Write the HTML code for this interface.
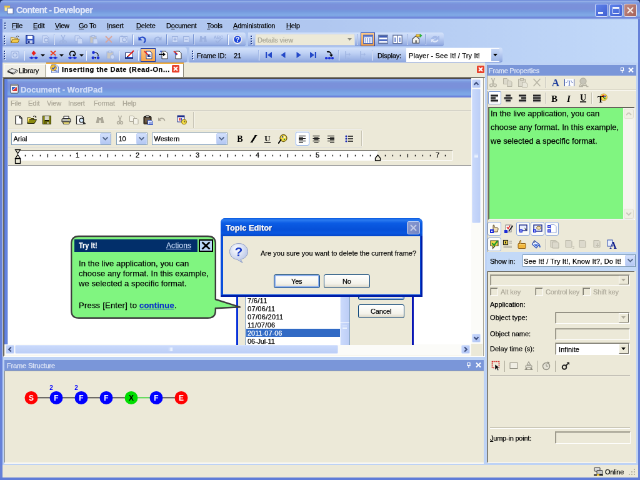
<!DOCTYPE html>
<html><head><meta charset="utf-8"><title>Content - Developer</title>
<style>
*{box-sizing:border-box;margin:0;padding:0}
html,body{width:640px;height:480px;overflow:hidden;background:#ece9d8}
body{position:relative}
#root{position:absolute;left:0;top:0;width:1024px;height:768px;transform:scale(.625);transform-origin:0 0;overflow:hidden;will-change:transform;background:#bdd2f5;font-family:"Liberation Sans",sans-serif;font-size:11px;color:#000}
.a{position:absolute}
.t{position:absolute;white-space:nowrap;-webkit-text-stroke:0.25px currentColor}
u{text-decoration:underline}
</style></head><body><div id="root">
<div class="a" style="left:0px;top:0px;width:1024px;height:8px;background:#1c2c66"></div>
<div class="a" style="left:0px;top:0px;width:1024px;height:30px;border-radius:6px 6px 0 0;background:linear-gradient(#6f8ad8 0,#7290dc 1px,#9ab4e8 2px,#7d9ce1 4px,#7a91da 7px,#7a90da 14px,#7598de 18px,#7fa8e5 23px,#7ea6e4 25.5px,#7189dc 27.5px,#6f86da 29px,#8fa9e6 30px)"></div>
<svg class="a" style="left:6px;top:7px;" width="16" height="16" viewBox="0 0 16 16"><rect x="1" y="2" width="9" height="9" fill="#f4e9a8" stroke="#7d8fb8"/><rect x="6" y="6" width="9" height="9" fill="#fff" stroke="#5a6fa8"/><rect x="1" y="2" width="9" height="3" fill="#e8c24a"/></svg>
<div class="t" style="left:26px;top:7.5px;font-size:14px;line-height:16px;color:#e1e8f9;letter-spacing:-0.58px;font-weight:bold;">Content - Developer</div>
<div class="a" style="left:952px;top:6px;width:21px;height:21px;border:1px solid #dfe7fa;border-radius:3px;background:linear-gradient(135deg,#5f83ea,#3f5fd2)"></div>
<div class="a" style="left:975px;top:6px;width:21px;height:21px;border:1px solid #dfe7fa;border-radius:3px;background:linear-gradient(135deg,#5f83ea,#3f5fd2)"></div>
<div class="a" style="left:998px;top:6px;width:21px;height:21px;border:1px solid #dfe7fa;border-radius:3px;background:linear-gradient(135deg,#c08a82,#a4625a)"></div>
<div class="a" style="left:957px;top:19px;width:8px;height:3px;background:#f0f4fd"></div>
<div class="a" style="left:980px;top:11px;width:11px;height:11px;border:1px solid #f0f4fd;border-top-width:3px"></div>
<svg class="a" style="left:998px;top:6px;" width="21" height="21" viewBox="0 0 21 21"><path d="M6 6L15 15M15 6L6 15" stroke="#f6ecea" stroke-width="2.2"/></svg>
<div class="a" style="left:0px;top:30px;width:1024px;height:70px;background:linear-gradient(90deg,#afc5ee 0,#b0c7f0 50%,#c2d9f9 100%)"></div>
<div class="a" style="left:0px;top:30px;width:1024px;height:1.5px;background:#b5cff5"></div>
<div class="a" style="left:8px;top:37px;width:2px;height:2px;background:#f0f5fd"></div>
<div class="a" style="left:7px;top:36px;width:2px;height:2px;background:#27408b"></div>
<div class="a" style="left:8px;top:41px;width:2px;height:2px;background:#f0f5fd"></div>
<div class="a" style="left:7px;top:40px;width:2px;height:2px;background:#27408b"></div>
<div class="a" style="left:8px;top:45px;width:2px;height:2px;background:#f0f5fd"></div>
<div class="a" style="left:7px;top:44px;width:2px;height:2px;background:#27408b"></div>
<div class="t" style="left:19px;top:35px;font-size:11px;line-height:13px;color:#000;letter-spacing:-0.16px;"><u>F</u>ile</div>
<div class="t" style="left:53px;top:35px;font-size:11px;line-height:13px;color:#000;letter-spacing:-0.17px;"><u>E</u>dit</div>
<div class="t" style="left:88px;top:35px;font-size:11px;line-height:13px;color:#000;letter-spacing:-0.21px;"><u>V</u>iew</div>
<div class="t" style="left:126px;top:35px;font-size:11px;line-height:13px;color:#000;letter-spacing:-0.20px;"><u>G</u>o To</div>
<div class="t" style="left:171px;top:35px;font-size:11px;line-height:13px;color:#000;letter-spacing:-0.16px;"><u>I</u>nsert</div>
<div class="t" style="left:218px;top:35px;font-size:11px;line-height:13px;color:#000;letter-spacing:-0.19px;"><u>D</u>elete</div>
<div class="t" style="left:266px;top:35px;font-size:11px;line-height:13px;color:#000;letter-spacing:-0.22px;">D<u>o</u>cument</div>
<div class="t" style="left:331px;top:35px;font-size:11px;line-height:13px;color:#000;letter-spacing:-0.18px;"><u>T</u>ools</div>
<div class="t" style="left:373px;top:35px;font-size:11px;line-height:13px;color:#000;letter-spacing:-0.17px;"><u>A</u>dministration</div>
<div class="t" style="left:458px;top:35px;font-size:11px;line-height:13px;color:#000;letter-spacing:-0.20px;"><u>H</u>elp</div>
<div class="a" style="left:3px;top:52px;width:390px;height:22px;background:linear-gradient(#d4e2fa 0,#c1d3f5 35%,#a3b9e8 75%,#8ea7df 100%);border-radius:0 4px 4px 0;border-bottom:1px solid #7a94d6;"></div>
<div class="a" style="left:397px;top:52px;width:313px;height:22px;background:linear-gradient(#d4e2fa 0,#c1d3f5 35%,#a3b9e8 75%,#8ea7df 100%);border-radius:0 4px 4px 0;border-bottom:1px solid #7a94d6;"></div>
<div class="a" style="left:3px;top:76px;width:296px;height:24px;background:linear-gradient(#d4e2fa 0,#c1d3f5 35%,#a3b9e8 75%,#8ea7df 100%);border-radius:0 4px 4px 0;border-bottom:1px solid #7a94d6;"></div>
<div class="a" style="left:303px;top:76px;width:501px;height:24px;background:linear-gradient(#d4e2fa 0,#c1d3f5 35%,#a3b9e8 75%,#8ea7df 100%);border-radius:0 4px 4px 0;border-bottom:1px solid #7a94d6;"></div>
<div class="a" style="left:7px;top:58px;width:2px;height:2px;background:#f0f5fd"></div>
<div class="a" style="left:6px;top:57px;width:2px;height:2px;background:#27408b"></div>
<div class="a" style="left:7px;top:62px;width:2px;height:2px;background:#f0f5fd"></div>
<div class="a" style="left:6px;top:61px;width:2px;height:2px;background:#27408b"></div>
<div class="a" style="left:7px;top:66px;width:2px;height:2px;background:#f0f5fd"></div>
<div class="a" style="left:6px;top:65px;width:2px;height:2px;background:#27408b"></div>
<div class="a" style="left:7px;top:70px;width:2px;height:2px;background:#f0f5fd"></div>
<div class="a" style="left:6px;top:69px;width:2px;height:2px;background:#27408b"></div>
<div class="a" style="left:402px;top:58px;width:2px;height:2px;background:#f0f5fd"></div>
<div class="a" style="left:401px;top:57px;width:2px;height:2px;background:#27408b"></div>
<div class="a" style="left:402px;top:62px;width:2px;height:2px;background:#f0f5fd"></div>
<div class="a" style="left:401px;top:61px;width:2px;height:2px;background:#27408b"></div>
<div class="a" style="left:402px;top:66px;width:2px;height:2px;background:#f0f5fd"></div>
<div class="a" style="left:401px;top:65px;width:2px;height:2px;background:#27408b"></div>
<div class="a" style="left:402px;top:70px;width:2px;height:2px;background:#f0f5fd"></div>
<div class="a" style="left:401px;top:69px;width:2px;height:2px;background:#27408b"></div>
<div class="a" style="left:7px;top:82px;width:2px;height:2px;background:#f0f5fd"></div>
<div class="a" style="left:6px;top:81px;width:2px;height:2px;background:#27408b"></div>
<div class="a" style="left:7px;top:86px;width:2px;height:2px;background:#f0f5fd"></div>
<div class="a" style="left:6px;top:85px;width:2px;height:2px;background:#27408b"></div>
<div class="a" style="left:7px;top:90px;width:2px;height:2px;background:#f0f5fd"></div>
<div class="a" style="left:6px;top:89px;width:2px;height:2px;background:#27408b"></div>
<div class="a" style="left:7px;top:94px;width:2px;height:2px;background:#f0f5fd"></div>
<div class="a" style="left:6px;top:93px;width:2px;height:2px;background:#27408b"></div>
<div class="a" style="left:308px;top:82px;width:2px;height:2px;background:#f0f5fd"></div>
<div class="a" style="left:307px;top:81px;width:2px;height:2px;background:#27408b"></div>
<div class="a" style="left:308px;top:86px;width:2px;height:2px;background:#f0f5fd"></div>
<div class="a" style="left:307px;top:85px;width:2px;height:2px;background:#27408b"></div>
<div class="a" style="left:308px;top:90px;width:2px;height:2px;background:#f0f5fd"></div>
<div class="a" style="left:307px;top:89px;width:2px;height:2px;background:#27408b"></div>
<div class="a" style="left:308px;top:94px;width:2px;height:2px;background:#f0f5fd"></div>
<div class="a" style="left:307px;top:93px;width:2px;height:2px;background:#27408b"></div>
<div class="a" style="left:86px;top:55px;width:1px;height:16px;background:#7391d2"></div>
<div class="a" style="left:87px;top:56px;width:1px;height:16px;background:#f4f8fe"></div>
<div class="a" style="left:212px;top:55px;width:1px;height:16px;background:#7391d2"></div>
<div class="a" style="left:213px;top:56px;width:1px;height:16px;background:#f4f8fe"></div>
<div class="a" style="left:266px;top:55px;width:1px;height:16px;background:#7391d2"></div>
<div class="a" style="left:267px;top:56px;width:1px;height:16px;background:#f4f8fe"></div>
<div class="a" style="left:309px;top:55px;width:1px;height:16px;background:#7391d2"></div>
<div class="a" style="left:310px;top:56px;width:1px;height:16px;background:#f4f8fe"></div>
<div class="a" style="left:364px;top:55px;width:1px;height:16px;background:#7391d2"></div>
<div class="a" style="left:365px;top:56px;width:1px;height:16px;background:#f4f8fe"></div>
<div class="a" style="left:571px;top:55px;width:1px;height:16px;background:#7391d2"></div>
<div class="a" style="left:572px;top:56px;width:1px;height:16px;background:#f4f8fe"></div>
<div class="a" style="left:651px;top:55px;width:1px;height:16px;background:#7391d2"></div>
<div class="a" style="left:652px;top:56px;width:1px;height:16px;background:#f4f8fe"></div>
<div class="a" style="left:680px;top:55px;width:1px;height:16px;background:#7391d2"></div>
<div class="a" style="left:681px;top:56px;width:1px;height:16px;background:#f4f8fe"></div>
<div class="a" style="left:38px;top:80px;width:1px;height:16px;background:#9fb6e6"></div>
<div class="a" style="left:39px;top:81px;width:1px;height:16px;background:#f4f8fe"></div>
<div class="a" style="left:137px;top:80px;width:1px;height:16px;background:#9fb6e6"></div>
<div class="a" style="left:138px;top:81px;width:1px;height:16px;background:#f4f8fe"></div>
<div class="a" style="left:190px;top:80px;width:1px;height:16px;background:#9fb6e6"></div>
<div class="a" style="left:191px;top:81px;width:1px;height:16px;background:#f4f8fe"></div>
<div class="a" style="left:220px;top:80px;width:1px;height:16px;background:#9fb6e6"></div>
<div class="a" style="left:221px;top:81px;width:1px;height:16px;background:#f4f8fe"></div>
<div class="a" style="left:413px;top:80px;width:1px;height:16px;background:#9fb6e6"></div>
<div class="a" style="left:414px;top:81px;width:1px;height:16px;background:#f4f8fe"></div>
<div class="a" style="left:541px;top:80px;width:1px;height:16px;background:#9fb6e6"></div>
<div class="a" style="left:542px;top:81px;width:1px;height:16px;background:#f4f8fe"></div>
<div class="a" style="left:595px;top:80px;width:1px;height:16px;background:#9fb6e6"></div>
<div class="a" style="left:596px;top:81px;width:1px;height:16px;background:#f4f8fe"></div>
<svg class="a" style="left:16px;top:55px;" width="16" height="16" viewBox="0 0 16 16"><path d="M1.5 13.5V4.5H5.5L7 6H12.5V8" fill="#f7e29a" stroke="#8a6d1f"/><path d="M1.5 13.5L4 8H15L12.5 13.5Z" fill="#f2c94c" stroke="#8a6d1f"/><path d="M10 3.5C12 2 13.5 2.5 14 4" stroke="#444" fill="none"/></svg>
<svg class="a" style="left:40px;top:55px;" width="16" height="16" viewBox="0 0 16 16"><path d="M1.5 1.5H13L14.5 3V14.5H1.5Z" fill="#3557c4" stroke="#1b2f86"/><rect x="4" y="2" width="8" height="5" fill="#fff"/><rect x="4" y="9.5" width="8" height="5" fill="#c9d3ee"/><rect x="5" y="10.5" width="2.5" height="3.5" fill="#1b2f86"/></svg>
<svg class="a" style="left:65px;top:55px;" width="16" height="16" viewBox="0 0 16 16"><path d="M3 2H10L13 5V14H3Z" fill="#cad8f5" stroke="#9db2e0"/><circle cx="9" cy="9" r="3" fill="none" stroke="#9db2e0" stroke-width="1.3"/><path d="M11 11L14 14" stroke="#9db2e0" stroke-width="1.6"/></svg>
<svg class="a" style="left:93px;top:55px;" width="16" height="16" viewBox="0 0 16 16"><path d="M5 1L9.5 10M11 1L6.5 10" stroke="#9db2e0" stroke-width="1.4" fill="none"/><circle cx="5" cy="12.5" r="2.2" fill="none" stroke="#9db2e0" stroke-width="1.4"/><circle cx="11" cy="12.5" r="2.2" fill="none" stroke="#9db2e0" stroke-width="1.4"/></svg>
<svg class="a" style="left:118px;top:55px;" width="16" height="16" viewBox="0 0 16 16"><path d="M2 2H8L10 4V11H2Z" fill="#cad8f5" stroke="#9db2e0"/><path d="M6 6H12L14 8V15H6Z" fill="#cad8f5" stroke="#9db2e0"/></svg>
<svg class="a" style="left:142px;top:55px;" width="16" height="16" viewBox="0 0 16 16"><rect x="2" y="3" width="10" height="11" fill="#c9c6c0" stroke="#9db2e0"/><rect x="5" y="1.5" width="4" height="3" fill="#cad8f5" stroke="#9db2e0"/><path d="M7 7H13L14.5 8.5V15H7Z" fill="#cad8f5" stroke="#9db2e0"/></svg>
<svg class="a" style="left:166px;top:55px;" width="16" height="16" viewBox="0 0 16 16"><path d="M3 3L13 13M13 3L3 13" stroke="#d9a49a" stroke-width="1.8"/></svg>
<svg class="a" style="left:190px;top:55px;" width="16" height="16" viewBox="0 0 16 16"><rect x="1.5" y="3.5" width="13" height="10" rx="1" fill="#cad8f5" stroke="#9db2e0"/><circle cx="9" cy="8.5" r="3.2" fill="none" stroke="#9db2e0" stroke-width="1.3"/><rect x="3" y="2" width="4" height="2" fill="#9db2e0"/></svg>
<svg class="a" style="left:220px;top:55px;" width="16" height="16" viewBox="0 0 16 16"><path d="M3 7C6 3 12 4 12.5 9C12.5 11 11.5 12.5 10 13.5" stroke="#2449c8" stroke-width="2.2" fill="none"/><path d="M1.5 3.5V9.5H7.5Z" fill="#2449c8"/></svg>
<svg class="a" style="left:244px;top:55px;" width="16" height="16" viewBox="0 0 16 16"><path d="M13 7C10 3 4 4 3.5 9C3.5 11 4.5 12.5 6 13.5" stroke="#9db2e0" stroke-width="2" fill="none"/><path d="M14.5 3.5V9.5H8.5Z" fill="#9db2e0"/></svg>
<svg class="a" style="left:272px;top:55px;" width="16" height="16" viewBox="0 0 16 16"><rect x="3.5" y="3.5" width="9" height="9" fill="#cad8f5" stroke="#9db2e0"/><path d="M5.5 8H10.5M8 5.5V10.5" stroke="#9db2e0" stroke-width="1.4"/></svg>
<svg class="a" style="left:290px;top:55px;" width="16" height="16" viewBox="0 0 16 16"><rect x="3.5" y="3.5" width="9" height="9" fill="#cad8f5" stroke="#9db2e0"/><path d="M5.5 8H10.5" stroke="#9db2e0" stroke-width="1.4"/></svg>
<svg class="a" style="left:317px;top:55px;" width="16" height="16" viewBox="0 0 16 16"><path d="M3 3H6V6L7 12H2L3 6Z M10 3H13V6L14 12H9L10 6Z" fill="#9db2e0"/><rect x="6" y="5" width="4" height="3" fill="#9db2e0"/></svg>
<svg class="a" style="left:341px;top:55px;" width="16" height="16" viewBox="0 0 16 16"><text x="1" y="7" font-family="Liberation Sans, sans-serif" font-size="7" font-weight="bold" fill="#9db2e0">ABC</text><path d="M4 10L7 13.5L13 7" stroke="#9db2e0" stroke-width="1.8" fill="none"/></svg>
<svg class="a" style="left:372px;top:55px;" width="16" height="16" viewBox="0 0 16 16"><circle cx="8.4" cy="8.4" r="7.6" fill="#b8b8c0"/><circle cx="8" cy="8" r="7.5" fill="#f4f7fe" stroke="#c9d0e0"/><circle cx="8" cy="8" r="5.8" fill="#1f46d8"/><text x="8" y="12" text-anchor="middle" font-family="Liberation Sans, sans-serif" font-size="11" font-weight="bold" fill="#fff">?</text></svg>
<div class="a" style="left:577px;top:52px;width:23px;height:22px;background:linear-gradient(#fbc98a,#f7a347);border:1px solid #1a3aa8"></div>
<svg class="a" style="left:581px;top:55px;" width="16" height="16" viewBox="0 0 16 16"><rect x="0.8" y="1.3" width="14.4" height="13.4" fill="#fff" stroke="#4a66b8" stroke-width="1.4"/><rect x="1.5" y="2" width="13" height="2.6" fill="#6d8ad8"/><path d="M4.2 6V13.5M7 6V13.5M10 6V13.5M12.5 6V13.5" stroke="#7f9ade" stroke-width="1.5"/></svg>
<svg class="a" style="left:605px;top:55px;" width="16" height="16" viewBox="0 0 16 16"><rect x="0.8" y="1.3" width="14.4" height="13.4" fill="#fff" stroke="#5d6f9c" stroke-width="1.3"/><rect x="1.5" y="2" width="13" height="3.2" fill="#3f5cb4"/><rect x="1.5" y="8" width="13" height="3" fill="#4a68c0"/><path d="M2 13H14" stroke="#9aa9d0"/></svg>
<svg class="a" style="left:628px;top:55px;" width="16" height="16" viewBox="0 0 16 16"><rect x="0.8" y="1.3" width="14.4" height="13.4" fill="#fff" stroke="#5d6f9c" stroke-width="1.3"/><path d="M8 2V14" stroke="#5d6f9c" stroke-width="1.3"/><path d="M4.2 5V12M11.8 5V12" stroke="#5a78cc" stroke-width="1.8"/></svg>
<svg class="a" style="left:659px;top:54px;" width="18" height="18" viewBox="0 0 18 18"><g transform="translate(-1,-1) scale(1.14)"><path d="M2 14V8L6.5 4L11 8V14Z" fill="#f2f2ee" stroke="#444"/><rect x="5.5" y="10" width="2.5" height="4" fill="#777"/><path d="M7 2H12V5H7Z" fill="#f5c83a" stroke="#a07818" stroke-width=".6"/><path d="M12 0.5L15.5 3.5L12 6.5Z" fill="#2fb23a"/></g></svg>
<svg class="a" style="left:688px;top:55px;" width="16" height="16" viewBox="0 0 16 16"><path d="M2 7.5C3 3 9 1.5 12.5 4.5L14.5 2.5V8.5H8.5L10.5 6.5C8.5 5 5.5 5.5 4.5 8Z" fill="#a6bbe8" stroke="#93abe0" stroke-width=".5"/><path d="M14 8.5C13 13 7 14.5 3.5 11.5L1.5 13.5V7.5H7.5L5.5 9.5C7.5 11 10.5 10.5 11.5 8Z" fill="#dfe8fa" stroke="#a6bbe8" stroke-width=".6"/></svg>
<svg class="a" style="left:16px;top:80px;" width="16" height="16" viewBox="0 0 16 16"><rect x="2" y="2" width="12" height="12" rx="2" fill="#cad8f5" stroke="#9db2e0"/><circle cx="8" cy="8" r="3.3" fill="none" stroke="#9db2e0" stroke-width="1.3"/></svg>
<svg class="a" style="left:46px;top:80px;" width="16" height="16" viewBox="0 0 16 16"><path d="M1 12.5H15" stroke="#1a2fd8" stroke-width="1.4"/><circle cx="4.5" cy="12.5" r="2.1" fill="#1a2fd8"/><circle cx="11.5" cy="12.5" r="2.1" fill="#1a2fd8"/><path d="M8 1L11.5 5L8 9L4.5 5Z" fill="#e8201a"/></svg>
<svg class="a" style="left:65px;top:87px;" width="7" height="4" viewBox="0 0 7 4"><path d="M0 0H7L3.5 3.5Z" fill="#000"/></svg>
<svg class="a" style="left:77px;top:80px;" width="16" height="16" viewBox="0 0 16 16"><path d="M1 12.5H15" stroke="#1a2fd8" stroke-width="1.4"/><circle cx="4.5" cy="12.5" r="2.1" fill="#1a2fd8"/><circle cx="11.5" cy="12.5" r="2.1" fill="#1a2fd8"/><path d="M4 1.5L12 8.5M12 1.5L4 8.5" stroke="#ee3a1a" stroke-width="1.8"/></svg>
<svg class="a" style="left:95px;top:87px;" width="7" height="4" viewBox="0 0 7 4"><path d="M0 0H7L3.5 3.5Z" fill="#000"/></svg>
<svg class="a" style="left:108px;top:80px;" width="16" height="16" viewBox="0 0 16 16"><path d="M1 12.5H15" stroke="#1a2fd8" stroke-width="1.4"/><circle cx="4.5" cy="12.5" r="2.1" fill="#1a2fd8"/><circle cx="11.5" cy="12.5" r="2.1" fill="#1a2fd8"/><path d="M5 9C2.5 7 3.5 2 8 2C12.5 2 13.5 7 11 9" stroke="#000" stroke-width="1.5" fill="none"/><path d="M9 6.5L12.5 9.5L8.5 10Z" fill="#000"/></svg>
<svg class="a" style="left:127px;top:87px;" width="7" height="4" viewBox="0 0 7 4"><path d="M0 0H7L3.5 3.5Z" fill="#000"/></svg>
<svg class="a" style="left:145px;top:80px;" width="16" height="16" viewBox="0 0 16 16"><path d="M5 4C12 4 12.5 7 12 10" stroke="#000" stroke-width="1.1" fill="none"/><path d="M6 12.5H9" stroke="#000" stroke-width="1.1"/><path d="M6 12.5L8 11V14Z" fill="#000"/><circle cx="4.5" cy="4" r="2.3" fill="#1a2fd8"/><circle cx="3.8" cy="12.5" r="2.3" fill="#1a2fd8"/><circle cx="12" cy="12.5" r="2.3" fill="#1a2fd8"/></svg>
<svg class="a" style="left:169px;top:80px;" width="16" height="16" viewBox="0 0 16 16"><rect x="2" y="3" width="10" height="11" fill="#cbc8c2" stroke="#9db2e0"/><rect x="5" y="1.5" width="4" height="3" fill="#cad8f5" stroke="#9db2e0"/><circle cx="11" cy="11" r="3.5" fill="#cad8f5" stroke="#9db2e0"/></svg>
<svg class="a" style="left:199px;top:80px;" width="16" height="16" viewBox="0 0 16 16"><rect x="1.5" y="4.5" width="12" height="9" fill="#fff" stroke="#1a2a6a"/><rect x="2" y="11" width="11" height="2" fill="#2a4ac8"/><path d="M15 1L6 10" stroke="#e8201a" stroke-width="2"/><path d="M6 10L4.5 11.5" stroke="#000" stroke-width="1.6"/></svg>
<div class="a" style="left:225px;top:77px;width:24px;height:22px;background:linear-gradient(#fbc98a,#f7a347);border:1px solid #1a3aa8"></div>
<svg class="a" style="left:229px;top:80px;" width="16" height="16" viewBox="0 0 16 16"><path d="M5 2H11L14 5V14H5Z" fill="#fff" stroke="#223a8a"/><path d="M7 8H12M7 10.5H12" stroke="#223a8a"/><path d="M2 2L9 9" stroke="#e8201a" stroke-width="1.8"/><path d="M6 10L10.5 10.5L10 6Z" fill="#1a2a6a"/></svg>
<svg class="a" style="left:254px;top:80px;" width="16" height="16" viewBox="0 0 16 16"><path d="M5 2H11L14 5V14H5Z" fill="#fff" stroke="#333"/><path d="M1 7H8" stroke="#000" stroke-width="1.8"/><path d="M7 4L11 7L7 10Z" fill="#000"/><path d="M2 2L5 2" stroke="#2a4ac8" stroke-width="1.5"/></svg>
<svg class="a" style="left:277px;top:80px;" width="16" height="16" viewBox="0 0 16 16"><path d="M4 2H10L13 5V14H4Z" fill="#fff" stroke="#333"/><path d="M1 2L7 7" stroke="#e8201a" stroke-width="1.8"/><path d="M3 5L6 8" stroke="#2a4ac8" stroke-width="1.6"/></svg>
<svg class="a" style="left:422px;top:80px;" width="16" height="16" viewBox="0 0 16 16"><rect x="3" y="3" width="2.2" height="10" fill="#2449c8"/><path d="M13 3V13L6 8Z" fill="#2449c8"/></svg>
<svg class="a" style="left:445px;top:80px;" width="16" height="16" viewBox="0 0 16 16"><path d="M11.5 3V13L4.5 8Z" fill="#2449c8"/></svg>
<svg class="a" style="left:470px;top:80px;" width="16" height="16" viewBox="0 0 16 16"><path d="M4.5 3V13L11.5 8Z" fill="#2449c8"/></svg>
<svg class="a" style="left:493px;top:80px;" width="16" height="16" viewBox="0 0 16 16"><rect x="10.8" y="3" width="2.2" height="10" fill="#2449c8"/><path d="M3 3V13L10 8Z" fill="#2449c8"/></svg>
<svg class="a" style="left:519px;top:80px;" width="16" height="16" viewBox="0 0 16 16"><path d="M1 13H15" stroke="#1a2fd8" stroke-width="1.2"/><circle cx="3" cy="13" r="1.9" fill="#1a2fd8"/><circle cx="8" cy="13" r="1.9" fill="#1a2fd8"/><circle cx="13" cy="13" r="1.9" fill="#1a2fd8"/><path d="M4 3C8 2 11 4 11 8" stroke="#000" stroke-width="1.8" fill="none"/><path d="M8 7.5H14L11 11Z" fill="#000"/></svg>
<svg class="a" style="left:549px;top:80px;" width="16" height="16" viewBox="0 0 16 16"><path d="M4 2V14" stroke="#9db2e0" stroke-width="1.4"/><path d="M5 7H11M9 5L11.5 7L9 9" stroke="#9db2e0" fill="none"/><path d="M7 12L11 13.5L7 15Z" fill="#9db2e0" opacity=".6"/></svg>
<svg class="a" style="left:573px;top:80px;" width="16" height="16" viewBox="0 0 16 16"><path d="M4 2V14" stroke="#9db2e0" stroke-width="1.4"/><path d="M5 7H11M9 5L11.5 7L9 9" stroke="#9db2e0" fill="none"/><path d="M7 12L11 13.5L7 15Z" fill="#9db2e0" opacity=".6"/></svg>
<div class="a" style="left:408px;top:54px;width:160px;height:19px;background:#ece9d8;border:1px solid #c9d6ee"></div>
<div class="t" style="left:412px;top:58px;font-size:11px;line-height:13px;color:#a9a796;letter-spacing:-0.14px;">Details view</div>
<svg class="a" style="left:556px;top:61px;" width="8" height="5" viewBox="0 0 8 5"><path d="M0 0H7L3.5 4Z" fill="#8a8a80"/></svg>
<div class="t" style="left:315px;top:83px;font-size:11px;line-height:13px;color:#000;letter-spacing:-0.21px;">Frame ID:</div>
<div class="t" style="left:374px;top:83px;font-size:11px;line-height:13px;color:#000;">21</div>
<div class="t" style="left:604px;top:83px;font-size:11px;line-height:13px;color:#000;letter-spacing:-0.14px;">Display:</div>
<div class="a" style="left:650px;top:77px;width:149px;height:22px;background:#fff;border:1px solid #fff"></div>
<div class="t" style="left:654px;top:83px;font-size:11px;line-height:13px;color:#000;letter-spacing:0.18px;">Player - See It! / Try It!</div>
<div class="a" style="left:786px;top:78px;width:13px;height:20px;background:linear-gradient(#c5d6f6,#9db6e6)"></div>
<svg class="a" style="left:789px;top:86px;" width="8" height="5" viewBox="0 0 8 5"><path d="M0 0H7L3.5 4Z" fill="#000"/></svg>
<div class="a" style="left:3px;top:100px;width:773px;height:24px;background:#ece9d8"></div>
<div class="a" style="left:3px;top:100px;width:773px;height:1px;background:#f8f7f0"></div>
<div class="a" style="left:6px;top:103px;width:67px;height:20px;background:#f1efe6;border:1px solid #fff;border-right-color:#aca899;border-bottom:none"></div>
<svg class="a" style="left:11px;top:107px;" width="18" height="13" viewBox="0 0 18 13"><path d="M1 6.5L8 2.5L17 5.5L10 10Z" fill="#e8e8e8" stroke="#333" stroke-width=".9"/><path d="M1 6.5L10 10V12L1 8.5Z" fill="#222"/><path d="M10 10L17 5.5V7.5L10 12Z" fill="#f4f4f4" stroke="#333" stroke-width=".8"/><path d="M4 6L9 3.5L14 5.5" stroke="#aaa" fill="none" stroke-width=".8"/></svg>
<div class="t" style="left:30px;top:106.5px;font-size:11px;line-height:13px;color:#000;letter-spacing:-0.23px;">Library</div>
<div class="a" style="left:74px;top:100px;width:220px;height:24px;background:#fff;border-right:1px solid #8a867a"></div>
<div class="a" style="left:74px;top:100px;width:220px;height:2px;background:#f2a629"></div>
<svg class="a" style="left:79px;top:102px;" width="16" height="16" viewBox="0 0 16 16"><path d="M3.5 1.5H11L14.5 5V14.5H3.5Z" fill="#dfe8fb" stroke="#6a86c8"/><circle cx="6.5" cy="6.5" r="4.8" fill="#f3c33a" stroke="#b8862a"/><path d="M4 6.5L6 8.5L9.5 4.5" stroke="#3050c0" fill="none" stroke-width="1.6"/><path d="M8 11L13 12" stroke="#3050c0" stroke-width="1.5"/></svg>
<div class="t" style="left:99px;top:104.5px;font-size:11px;line-height:13px;color:#000;letter-spacing:0.61px;font-weight:bold;">Inserting the Date (Read-On...</div>
<svg class="a" style="left:275px;top:104px;" width="12" height="12" viewBox="0 0 12 12"><rect x="0" y="0" width="12" height="12" rx="1.5" fill="#e8412c"/><path d="M3 3L9 9M9 3L3 9" stroke="#fff" stroke-width="2"/></svg>
<svg class="a" style="left:763px;top:105px;" width="12" height="12" viewBox="0 0 12 12"><rect x="0" y="0" width="12" height="12" rx="1.5" fill="#e8412c"/><path d="M3 3L9 9M9 3L3 9" stroke="#fff" stroke-width="2"/></svg>
<div class="a" style="left:3px;top:123px;width:773px;height:1px;background:#8a867a"></div>
<div class="a" style="left:0px;top:30px;width:4px;height:738px;background:#6681d8"></div>
<div class="a" style="left:1021px;top:30px;width:3px;height:738px;background:#6681d8"></div>
<div class="a" style="left:0px;top:764px;width:1024px;height:4px;background:#5f7cd8"></div>
<div class="a" style="left:4px;top:124px;width:772px;height:447px;background:#ece9d8"></div>
<div class="a" style="left:5px;top:124px;width:771px;height:447px;background:#ece9d8;border:1px solid #716f64;border-right-color:#fff;border-bottom-color:#fff"></div>
<div class="a" style="left:6px;top:125px;width:1px;height:444px;background:#4a443c"></div>
<div class="a" style="left:6px;top:125px;width:767px;height:1px;background:#4a443c"></div>
<div class="a" style="left:7px;top:126px;width:748px;height:30px;background:linear-gradient(#6f88dc 0,#7893de 1px,#8fb0ea 2px,#7d9ce1 4px,#7a91da 7px,#7a90da 14px,#7598de 18px,#7da6e5 23px,#7da7e6 26px,#6b82dc 28px,#6a80dc 30px)"></div>
<div class="a" style="left:7px;top:126px;width:5px;height:426px;background:#6282e0"></div>
<div class="a" style="left:12px;top:156px;width:1px;height:396px;background:#c8d0e8"></div>
<svg class="a" style="left:16px;top:134px;" width="14" height="16" viewBox="0 0 14 16"><rect x="1" y="1" width="12" height="14" rx="1" fill="#fff" stroke="#444"/><rect x="2" y="2" width="10" height="2" fill="#999"/><path d="M3 12L11 5V12Z" fill="#d33"/><path d="M3 5H10L3 11Z" fill="#36c"/></svg>
<div class="t" style="left:33px;top:135.5px;font-size:13px;line-height:15px;color:#d0dcf7;letter-spacing:-0.05px;font-weight:bold;">Document - WordPad</div>
<div class="a" style="left:13px;top:156px;width:742px;height:20px;background:#ece9d8"></div>
<div class="t" style="left:17px;top:159px;font-size:11px;line-height:13px;color:#aca899;letter-spacing:-0.13px;">File</div>
<div class="t" style="left:45px;top:159px;font-size:11px;line-height:13px;color:#aca899;letter-spacing:-0.14px;">Edit</div>
<div class="t" style="left:75px;top:159px;font-size:11px;line-height:13px;color:#aca899;letter-spacing:-0.18px;">View</div>
<div class="t" style="left:109px;top:159px;font-size:11px;line-height:13px;color:#aca899;letter-spacing:-0.14px;">Insert</div>
<div class="t" style="left:150px;top:159px;font-size:11px;line-height:13px;color:#aca899;letter-spacing:-0.17px;">Format</div>
<div class="t" style="left:196px;top:159px;font-size:11px;line-height:13px;color:#aca899;letter-spacing:-0.17px;">Help</div>
<div class="a" style="left:13px;top:176px;width:742px;height:1px;background:#c5c2b2"></div>
<div class="a" style="left:13px;top:177px;width:742px;height:1px;background:#fff"></div>
<div class="a" style="left:13px;top:206px;width:566px;height:1px;background:#c5c2b2"></div>
<div class="a" style="left:13px;top:207px;width:566px;height:1px;background:#fff"></div>
<div class="a" style="left:309px;top:179px;width:1px;height:26px;background:#c5c2b2"></div>
<div class="a" style="left:310px;top:179px;width:1px;height:26px;background:#fff"></div>
<svg class="a" style="left:22px;top:184px;" width="16" height="16" viewBox="0 0 16 16"><path d="M3 1.5H9.5L13 5V14.5H3Z" fill="#fff" stroke="#000" stroke-width="1.2"/><path d="M9.5 1.5V5H13" fill="none" stroke="#000"/></svg>
<svg class="a" style="left:43px;top:184px;" width="18" height="16" viewBox="0 0 18 16"><path d="M1 13.5V4H5L6.5 5.5H11V7.5" fill="#f5e27a" stroke="#3a3a00"/><path d="M1 13.5L4 7.5H15.5L12 13.5Z" fill="#8a8a10" stroke="#1a1a00"/><path d="M2 8V12L4 8Z" fill="#f5d83a"/><path d="M10 2.5C12 1 14 1.5 14.5 3.5" stroke="#000" fill="none"/><path d="M13 4L15.5 3.5L14.5 1.5" fill="#000"/></svg>
<svg class="a" style="left:67px;top:184px;" width="16" height="16" viewBox="0 0 16 16"><rect x="1" y="1" width="14" height="14" fill="#1a1a00"/><rect x="2" y="2" width="2.5" height="12" fill="#8a8a10"/><rect x="11.5" y="2" width="2.5" height="12" fill="#8a8a10"/><rect x="4.5" y="2" width="7" height="6" fill="#d8d8c8"/><rect x="5" y="10" width="6" height="4" fill="#6a6a10"/><rect x="9" y="11" width="1.5" height="3" fill="#fff"/></svg>
<svg class="a" style="left:98px;top:184px;" width="16" height="16" viewBox="0 0 16 16"><path d="M4 6V2H12V6" fill="#fff" stroke="#222"/><path d="M1 7Q1 5.5 3 5.5H13Q15 5.5 15 7V11H1Z" fill="#b8b8b0" stroke="#222"/><path d="M2.5 11H13.5L12.5 14.5H3.5Z" fill="#f2e27a" stroke="#222"/><rect x="11" y="7" width="2" height="1.3" fill="#dd3"/></svg>
<svg class="a" style="left:121px;top:184px;" width="17" height="16" viewBox="0 0 17 16"><path d="M1.5 1.5H10L12.5 4V14.5H1.5Z" fill="#fff" stroke="#222" stroke-width="1.2"/><circle cx="9.5" cy="8.5" r="3.3" fill="#cfe6f8" stroke="#222" stroke-width="1.3"/><path d="M12 11L15.5 14.5" stroke="#222" stroke-width="2"/></svg>
<svg class="a" style="left:152px;top:184px;" width="16" height="16" viewBox="0 0 16 16"><path d="M3 3H6V6L7 13H1.5L3 6Z M10 3H13V6L14.5 13H9L10 6Z" fill="#aca899"/><rect x="6" y="5" width="4" height="3.5" fill="#aca899"/></svg>
<svg class="a" style="left:184px;top:184px;" width="16" height="16" viewBox="0 0 16 16"><path d="M5.5 1L9 10M10.5 1L7 10" stroke="#aca899" stroke-width="1.4" fill="none"/><circle cx="5.5" cy="12.5" r="2" fill="none" stroke="#aca899" stroke-width="1.4"/><circle cx="10.5" cy="12.5" r="2" fill="none" stroke="#aca899" stroke-width="1.4"/></svg>
<svg class="a" style="left:206px;top:184px;" width="17" height="16" viewBox="0 0 17 16"><path d="M1.5 1.5H7L9 3.5V10.5H1.5Z" fill="#f4f2e8" stroke="#aca899"/><path d="M7.5 5.5H13L15 7.5V14.5H7.5Z" fill="#f4f2e8" stroke="#aca899"/></svg>
<svg class="a" style="left:229px;top:184px;" width="17" height="16" viewBox="0 0 17 16"><rect x="1" y="2.5" width="12" height="12" rx="1" fill="#4a3a28" stroke="#111"/><rect x="4.5" y="1" width="5" height="3" fill="#c8c8c0" stroke="#111"/><rect x="3" y="5" width="8" height="7" fill="#6a5a48"/><path d="M7.5 8.5H13L15.5 11V15.5H7.5Z" fill="#dfe8ff" stroke="#2a4ab8"/><path d="M9 12H14M9 14H14" stroke="#2a4ab8" stroke-width=".8"/></svg>
<svg class="a" style="left:252px;top:184px;" width="16" height="16" viewBox="0 0 16 16"><path d="M3 7C6 4 11 5 11.5 9.5" stroke="#aca899" stroke-width="1.8" fill="none"/><path d="M1 4V9.5H6.5Z" fill="#aca899"/></svg>
<svg class="a" style="left:283px;top:184px;" width="17" height="16" viewBox="0 0 17 16"><rect x="1" y="1" width="11" height="10" fill="#fff" stroke="#1a2a8a"/><rect x="1" y="1" width="11" height="2.5" fill="#1a2a8a"/><path d="M3 6H6M3 8H6" stroke="#d22" stroke-width="1.4"/><path d="M7.5 5V9" stroke="#2a4ac8" stroke-width="1.4"/><circle cx="11.5" cy="11" r="4" fill="#f7e24a" stroke="#8a6a00"/><path d="M11.5 8.5V11H13.5" stroke="#333" fill="none"/></svg>
<svg class="a" style="left:376px;top:214px;" width="16" height="16" viewBox="0 0 16 16"><text x="8" y="13" text-anchor="middle" font-family="Liberation Serif, serif" font-weight="bold" font-size="14" fill="#000">B</text></svg>
<svg class="a" style="left:398px;top:214px;" width="16" height="16" viewBox="0 0 16 16"><path d="M11.5 2.5L4.5 13.5" stroke="#000" stroke-width="2.6"/><path d="M9.5 2.5H13.5M2.5 13.5H6.5" stroke="#000" stroke-width="1"/></svg>
<svg class="a" style="left:420px;top:214px;" width="16" height="16" viewBox="0 0 16 16"><text x="8" y="11.5" text-anchor="middle" font-family="Liberation Serif, serif" font-weight="bold" font-size="13" fill="#000">U</text><path d="M3 14H13" stroke="#000" stroke-width="1.4"/></svg>
<svg class="a" style="left:444px;top:214px;" width="17" height="17" viewBox="0 0 17 17"><circle cx="9.5" cy="7" r="5.5" fill="#f3dc4a" stroke="#6a5a10" stroke-width="1.3"/><circle cx="8" cy="5" r="1.2" fill="#2a4ac8"/><circle cx="11.5" cy="5.5" r="1.2" fill="#fff"/><circle cx="11" cy="9" r="1.2" fill="#2a9a3a"/><path d="M1.5 15L6 9" stroke="#000" stroke-width="1.8"/><path d="M1 15.5L3.5 14.5" stroke="#000"/></svg>
<div class="a" style="left:473px;top:211px;width:22px;height:22px;background:#fff;border:1px solid #98b5e2;border-radius:3px;box-shadow:0 0 0 1px #dfe8f8"></div>
<svg class="a" style="left:476px;top:214px;" width="16" height="16" viewBox="0 0 16 16"><rect x="2" y="3" width="11" height="1.2" fill="#111"/><rect x="2" y="5" width="7" height="1.2" fill="#111"/><rect x="2" y="7" width="11" height="1.2" fill="#111"/><rect x="2" y="9" width="7" height="1.2" fill="#111"/><rect x="2" y="11" width="11" height="1.2" fill="#111"/><rect x="2" y="13" width="7" height="1.2" fill="#111"/></svg>
<svg class="a" style="left:498px;top:214px;" width="16" height="16" viewBox="0 0 16 16"><rect x="2.5" y="3" width="11" height="1.2" fill="#111"/><rect x="4.5" y="5" width="7" height="1.2" fill="#111"/><rect x="2.5" y="7" width="11" height="1.2" fill="#111"/><rect x="4.5" y="9" width="7" height="1.2" fill="#111"/><rect x="2.5" y="11" width="11" height="1.2" fill="#111"/><rect x="4.5" y="13" width="7" height="1.2" fill="#111"/></svg>
<svg class="a" style="left:521px;top:214px;" width="16" height="16" viewBox="0 0 16 16"><rect x="3" y="3" width="11" height="1.2" fill="#111"/><rect x="7" y="5" width="7" height="1.2" fill="#111"/><rect x="3" y="7" width="11" height="1.2" fill="#111"/><rect x="7" y="9" width="7" height="1.2" fill="#111"/><rect x="3" y="11" width="11" height="1.2" fill="#111"/><rect x="7" y="13" width="7" height="1.2" fill="#111"/></svg>
<svg class="a" style="left:551px;top:214px;" width="16" height="16" viewBox="0 0 16 16"><circle cx="3" cy="4" r="1.6" fill="#1a2ab8"/><circle cx="3" cy="8" r="1.6" fill="#1a2ab8"/><circle cx="3" cy="12" r="1.6" fill="#1a2ab8"/><path d="M6 4H14M6 8H14M6 12H14" stroke="#111" stroke-width="1.4"/></svg>
<div class="a" style="left:18px;top:212px;width:160px;height:20px;background:#fff;border:1px solid #7f9db9"></div>
<div class="a" style="left:160px;top:213px;width:17px;height:18px;background:linear-gradient(#d3e0fb,#b3c7f3);border:1px solid #c3d3f7;border-radius:2px"></div>
<svg class="a" style="left:164px;top:219px;" width="9" height="6" viewBox="0 0 9 6"><path d="M0.5 0.5L4.5 4.5L8.5 0.5" stroke="#4d6185" stroke-width="1.8" fill="none"/></svg>
<div class="t" style="left:21.5px;top:215.5px;font-size:11px;line-height:13px;color:#000;">Arial</div>
<div class="a" style="left:186px;top:212px;width:50px;height:20px;background:#fff;border:1px solid #7f9db9"></div>
<div class="a" style="left:218px;top:213px;width:17px;height:18px;background:linear-gradient(#d3e0fb,#b3c7f3);border:1px solid #c3d3f7;border-radius:2px"></div>
<svg class="a" style="left:222px;top:219px;" width="9" height="6" viewBox="0 0 9 6"><path d="M0.5 0.5L4.5 4.5L8.5 0.5" stroke="#4d6185" stroke-width="1.8" fill="none"/></svg>
<div class="t" style="left:189.5px;top:215.5px;font-size:11px;line-height:13px;color:#000;">10</div>
<div class="a" style="left:243px;top:212px;width:121px;height:20px;background:#fff;border:1px solid #7f9db9"></div>
<div class="a" style="left:346px;top:213px;width:17px;height:18px;background:linear-gradient(#d3e0fb,#b3c7f3);border:1px solid #c3d3f7;border-radius:2px"></div>
<svg class="a" style="left:350px;top:219px;" width="9" height="6" viewBox="0 0 9 6"><path d="M0.5 0.5L4.5 4.5L8.5 0.5" stroke="#4d6185" stroke-width="1.8" fill="none"/></svg>
<div class="t" style="left:246.5px;top:215.5px;font-size:11px;line-height:13px;color:#000;">Western</div>
<div class="a" style="left:578px;top:209px;width:1px;height:25px;background:#c5c2b2"></div>
<div class="a" style="left:579px;top:209px;width:1px;height:25px;background:#fff"></div>
<div class="a" style="left:13px;top:235px;width:566px;height:1px;background:#c5c2b2"></div>
<div class="a" style="left:13px;top:236px;width:566px;height:1px;background:#fff"></div>
<div class="a" style="left:13px;top:237px;width:742px;height:27px;background:#ece9d8"></div>
<div class="a" style="left:28px;top:240px;width:696px;height:17px;background:#ece9d8;border:1px solid #aca899;border-bottom-color:#fff;border-right-color:#fff"></div>
<div class="a" style="left:29px;top:240px;width:575px;height:16px;background:#fff;border-top:1.5px solid #55534a"></div>
<div class="a" style="left:604px;top:240px;width:120px;height:1px;background:#8a887c"></div>
<div class="t" style="left:121px;top:242px;font-size:11px;line-height:13px;color:#000;">1</div>
<div class="t" style="left:217px;top:242px;font-size:11px;line-height:13px;color:#000;">2</div>
<div class="t" style="left:313px;top:242px;font-size:11px;line-height:13px;color:#000;">3</div>
<div class="t" style="left:409px;top:242px;font-size:11px;line-height:13px;color:#000;">4</div>
<div class="t" style="left:505px;top:242px;font-size:11px;line-height:13px;color:#000;">5</div>
<div class="t" style="left:697px;top:242px;font-size:11px;line-height:13px;color:#000;">7</div>
<svg class="a" style="left:0px;top:242px;" width="760" height="14" viewBox="0 0 760 14"><rect x="39.8" y="5.7" width="1.3" height="2.6" fill="#000"/><rect x="51.8" y="5.7" width="1.3" height="2.6" fill="#000"/><rect x="63.8" y="5.7" width="1.3" height="2.6" fill="#000"/><rect x="75.8" y="4.25" width="1.3" height="5.5" fill="#000"/><rect x="87.8" y="5.7" width="1.3" height="2.6" fill="#000"/><rect x="99.8" y="5.7" width="1.3" height="2.6" fill="#000"/><rect x="111.8" y="5.7" width="1.3" height="2.6" fill="#000"/><rect x="135.8" y="5.7" width="1.3" height="2.6" fill="#000"/><rect x="147.8" y="5.7" width="1.3" height="2.6" fill="#000"/><rect x="159.8" y="5.7" width="1.3" height="2.6" fill="#000"/><rect x="171.8" y="4.25" width="1.3" height="5.5" fill="#000"/><rect x="183.8" y="5.7" width="1.3" height="2.6" fill="#000"/><rect x="195.8" y="5.7" width="1.3" height="2.6" fill="#000"/><rect x="207.8" y="5.7" width="1.3" height="2.6" fill="#000"/><rect x="231.8" y="5.7" width="1.3" height="2.6" fill="#000"/><rect x="243.8" y="5.7" width="1.3" height="2.6" fill="#000"/><rect x="255.8" y="5.7" width="1.3" height="2.6" fill="#000"/><rect x="267.8" y="4.25" width="1.3" height="5.5" fill="#000"/><rect x="279.8" y="5.7" width="1.3" height="2.6" fill="#000"/><rect x="291.8" y="5.7" width="1.3" height="2.6" fill="#000"/><rect x="303.8" y="5.7" width="1.3" height="2.6" fill="#000"/><rect x="327.8" y="5.7" width="1.3" height="2.6" fill="#000"/><rect x="339.8" y="5.7" width="1.3" height="2.6" fill="#000"/><rect x="351.8" y="5.7" width="1.3" height="2.6" fill="#000"/><rect x="363.8" y="4.25" width="1.3" height="5.5" fill="#000"/><rect x="375.8" y="5.7" width="1.3" height="2.6" fill="#000"/><rect x="387.8" y="5.7" width="1.3" height="2.6" fill="#000"/><rect x="399.8" y="5.7" width="1.3" height="2.6" fill="#000"/><rect x="423.8" y="5.7" width="1.3" height="2.6" fill="#000"/><rect x="435.8" y="5.7" width="1.3" height="2.6" fill="#000"/><rect x="447.8" y="5.7" width="1.3" height="2.6" fill="#000"/><rect x="459.8" y="4.25" width="1.3" height="5.5" fill="#000"/><rect x="471.8" y="5.7" width="1.3" height="2.6" fill="#000"/><rect x="483.8" y="5.7" width="1.3" height="2.6" fill="#000"/><rect x="495.8" y="5.7" width="1.3" height="2.6" fill="#000"/><rect x="519.8" y="5.7" width="1.3" height="2.6" fill="#000"/><rect x="531.8" y="5.7" width="1.3" height="2.6" fill="#000"/><rect x="543.8" y="5.7" width="1.3" height="2.6" fill="#000"/><rect x="555.8" y="4.25" width="1.3" height="5.5" fill="#000"/><rect x="567.8" y="5.7" width="1.3" height="2.6" fill="#000"/><rect x="579.8" y="5.7" width="1.3" height="2.6" fill="#000"/><rect x="591.8" y="5.7" width="1.3" height="2.6" fill="#000"/><rect x="615.8" y="5.7" width="1.3" height="2.6" fill="#000"/><rect x="627.8" y="5.7" width="1.3" height="2.6" fill="#000"/><rect x="639.8" y="5.7" width="1.3" height="2.6" fill="#000"/><rect x="651.8" y="4.25" width="1.3" height="5.5" fill="#000"/><rect x="663.8" y="5.7" width="1.3" height="2.6" fill="#000"/><rect x="675.8" y="5.7" width="1.3" height="2.6" fill="#000"/><rect x="687.8" y="5.7" width="1.3" height="2.6" fill="#000"/><rect x="711.8" y="5.7" width="1.3" height="2.6" fill="#000"/></svg>
<svg class="a" style="left:23px;top:238px;" width="12" height="26" viewBox="0 0 12 26"><path d="M1.5 1.5H9.5L5.5 7.5Z" fill="#ece9d8" stroke="#000" stroke-width="1.3"/><path d="M5.5 9.5L9.5 15.5H1.5Z" fill="#ece9d8" stroke="#000" stroke-width="1.3"/><rect x="1.5" y="16.5" width="8" height="7" fill="#ece9d8" stroke="#000" stroke-width="1.3"/></svg>
<svg class="a" style="left:599px;top:247px;" width="12" height="12" viewBox="0 0 12 12"><path d="M5.5 1L9.5 6V10H1.5V6Z" fill="#ece9d8" stroke="#000" stroke-width="1.3"/></svg>
<div class="a" style="left:13px;top:264px;width:742px;height:1px;background:#808080"></div>
<div class="a" style="left:13px;top:265px;width:742px;height:287px;background:#fff"></div>
<div class="a" style="left:754px;top:125px;width:18px;height:427px;background:#fbfbf8"></div>
<div class="a" style="left:755px;top:127px;width:14px;height:14px;background:linear-gradient(135deg,#c6d6fb,#b0c4f3);border:1px solid #d9e4fc;border-radius:2px"></div>
<svg class="a" style="left:755px;top:127px;" width="14" height="14" viewBox="0 0 14 14"><path transform="translate(7.0,7.0)" d="M-3.5 1.8L0 -1.8L3.5 1.8" stroke="#3f5080" stroke-width="2.2" fill="none"/></svg>
<div class="a" style="left:755px;top:142px;width:14px;height:215px;background:linear-gradient(90deg,#c9d9fb,#bccef6);border:1px solid #d9e4fc;border-radius:2px"></div>
<div class="a" style="left:759px;top:246px;width:6px;height:1px;background:#eef4fe"></div>
<div class="a" style="left:759px;top:248px;width:6px;height:1px;background:#eef4fe"></div>
<div class="a" style="left:759px;top:250px;width:6px;height:1px;background:#eef4fe"></div>
<div class="a" style="left:759px;top:252px;width:6px;height:1px;background:#eef4fe"></div>
<div class="a" style="left:755px;top:534px;width:14px;height:14px;background:linear-gradient(135deg,#c6d6fb,#b0c4f3);border:1px solid #d9e4fc;border-radius:2px"></div>
<svg class="a" style="left:755px;top:534px;" width="14" height="14" viewBox="0 0 14 14"><path transform="translate(7.0,7.0)" d="M-3.5 -1.8L0 1.8L3.5 -1.8" stroke="#3f5080" stroke-width="2.2" fill="none"/></svg>
<div class="a" style="left:7px;top:551px;width:765px;height:18px;background:#fbfbf8"></div>
<div class="a" style="left:9px;top:552px;width:14px;height:14px;background:linear-gradient(135deg,#c6d6fb,#b0c4f3);border:1px solid #d9e4fc;border-radius:2px"></div>
<svg class="a" style="left:9px;top:552px;" width="14" height="14" viewBox="0 0 14 14"><path transform="translate(7.0,7.0)" d="M1.8 -3.5L-1.8 0L1.8 3.5" stroke="#3f5080" stroke-width="2.2" fill="none"/></svg>
<div class="a" style="left:24px;top:552px;width:517px;height:14px;background:linear-gradient(#c9d9fb,#bccef6);border:1px solid #d9e4fc;border-radius:2px"></div>
<div class="a" style="left:270px;top:556px;width:1px;height:6px;background:#eef4fe"></div>
<div class="a" style="left:272px;top:556px;width:1px;height:6px;background:#eef4fe"></div>
<div class="a" style="left:274px;top:556px;width:1px;height:6px;background:#eef4fe"></div>
<div class="a" style="left:276px;top:556px;width:1px;height:6px;background:#eef4fe"></div>
<div class="a" style="left:738px;top:552px;width:14px;height:14px;background:linear-gradient(135deg,#c6d6fb,#b0c4f3);border:1px solid #d9e4fc;border-radius:2px"></div>
<svg class="a" style="left:738px;top:552px;" width="14" height="14" viewBox="0 0 14 14"><path transform="translate(7.0,7.0)" d="M-1.8 -3.5L1.8 0L-1.8 3.5" stroke="#3f5080" stroke-width="2.2" fill="none"/></svg>
<div class="a" style="left:754px;top:550px;width:18px;height:19px;background:#ece9d8"></div>
<div class="a" style="left:772px;top:125px;width:4px;height:445px;background:#f8f7f2"></div>
<div class="a" style="left:773px;top:125px;width:1px;height:445px;background:#a3a196"></div>
<div class="a" style="left:779px;top:104px;width:239px;height:17px;background:#7a96d9"></div>
<div class="t" style="left:782px;top:107px;font-size:11px;line-height:13px;color:#dfe6f6;letter-spacing:-0.25px;">Frame Properties</div>
<svg class="a" style="left:990px;top:106px;" width="26" height="13" viewBox="0 0 26 13"><path d="M3.5 2.5H7.5V6.5H3.5Z M2.5 7H8.5 M5.5 7.5V11" stroke="#fff" stroke-width="1.2" fill="none"/><path d="M16 2.5L23 9.5M23 2.5L16 9.5" stroke="#fff" stroke-width="2"/></svg>
<div class="a" style="left:779px;top:121px;width:239px;height:620px;background:#ece9d8"></div>
<div class="a" style="left:779px;top:104px;width:1px;height:637px;background:#9a988c"></div>
<div class="a" style="left:779px;top:143px;width:239px;height:1px;background:#d8d5c6"></div>
<div class="a" style="left:779px;top:144px;width:239px;height:1px;background:#fbfaf6"></div>
<div class="a" style="left:872px;top:123px;width:1px;height:18px;background:#c5c2b2"></div>
<div class="a" style="left:873px;top:123px;width:1px;height:18px;background:#fff"></div>
<div class="a" style="left:872px;top:148px;width:1px;height:18px;background:#c5c2b2"></div>
<div class="a" style="left:873px;top:148px;width:1px;height:18px;background:#fff"></div>
<div class="a" style="left:946px;top:148px;width:1px;height:18px;background:#c5c2b2"></div>
<div class="a" style="left:947px;top:148px;width:1px;height:18px;background:#fff"></div>
<div class="a" style="left:781px;top:146px;width:21px;height:21px;background:#fff;border:1px solid #7b9ad6;border-radius:2px"></div>
<div class="a" style="left:781px;top:171px;width:235px;height:181px;background:#80f580;border:1px solid #716f64;border-right-color:#fff;border-bottom-color:#fff"></div>
<div class="a" style="left:782px;top:172px;width:233px;height:179px;border:1px solid #5a5850;border-right-color:#d4d0c8;border-bottom-color:#d4d0c8"></div>
<div class="a" style="left:997px;top:173px;width:17px;height:177px;background:#f5f4ee"></div>
<div class="a" style="left:998px;top:174px;width:16px;height:16px;background:#f1efe4;border:1px solid #e3e0d2;border-radius:3px"></div>
<svg class="a" style="left:1002px;top:180px;" width="9" height="5" viewBox="0 0 9 5"><path d="M0 4L4 0L8 4" stroke="#c9c7ba" stroke-width="2" fill="none"/></svg>
<div class="a" style="left:998px;top:334px;width:16px;height:16px;background:#f1efe4;border:1px solid #e3e0d2;border-radius:3px"></div>
<svg class="a" style="left:1002px;top:340px;" width="9" height="5" viewBox="0 0 9 5"><path d="M0 0L4 4L8 0" stroke="#c9c7ba" stroke-width="2" fill="none"/></svg>
<div class="t" style="left:785px;top:174px;font-size:13px;line-height:15px;color:#000;">In the live application, you can</div>
<div class="t" style="left:785px;top:196px;font-size:13px;line-height:15px;color:#000;">choose any format. In this example,</div>
<div class="t" style="left:785px;top:218px;font-size:13px;line-height:15px;color:#000;">we selected a specific format.</div>
<div class="a" style="left:780px;top:355px;width:22px;height:22px;background:#fbfbf8;border:1px solid #8aa6dc;border-radius:3px"></div>
<div class="a" style="left:826px;top:355px;width:22px;height:22px;background:#fbfbf8;border:1px solid #8aa6dc;border-radius:3px"></div>
<div class="a" style="left:849px;top:355px;width:22px;height:22px;background:#fbfbf8;border:1px solid #8aa6dc;border-radius:3px"></div>
<div class="a" style="left:872px;top:355px;width:22px;height:22px;background:#fbfbf8;border:1px solid #8aa6dc;border-radius:3px"></div>
<div class="a" style="left:780px;top:380px;width:22px;height:22px;background:#fbfbf8;border:1px solid #8aa6dc;border-radius:3px"></div>
<div class="a" style="left:872px;top:382px;width:1px;height:18px;background:#c5c2b2"></div>
<div class="a" style="left:873px;top:382px;width:1px;height:18px;background:#fff"></div>
<div class="a" style="left:779px;top:403px;width:239px;height:31px;background:#c3d9f7"></div>
<div class="t" style="left:784px;top:412px;font-size:11px;line-height:13px;color:#000;letter-spacing:-0.27px;">Show in:</div>
<div class="a" style="left:836px;top:407px;width:181px;height:20px;background:#fff;border:1px solid #7f9db9"></div>
<div class="t" style="left:838px;top:412px;font-size:11px;line-height:13px;color:#000;letter-spacing:0.18px;">See It! / Try It!, Know It?, Do It!</div>
<div class="a" style="left:1000px;top:408px;width:16px;height:18px;background:linear-gradient(#d3e0fb,#b3c7f3);border:1px solid #c3d3f7;border-radius:2px"></div>
<svg class="a" style="left:1004px;top:414px;" width="9" height="6" viewBox="0 0 9 6"><path d="M0.5 0.5L4.5 4.5L8.5 0.5" stroke="#4d6185" stroke-width="1.8" fill="none"/></svg>
<div class="a" style="left:780px;top:434px;width:235px;height:306px;border:1.5px solid #6a685e;border-bottom:none;border-right:none"></div>
<div class="a" style="left:784px;top:439px;width:224px;height:18px;background:#ece9d8;border:1px solid #aca899;border-right-color:#fff;border-bottom-color:#fff;box-shadow:inset 1px 1px 0 #7d7b70"></div>
<div class="a" style="left:990px;top:441px;width:16px;height:14px;background:#ece9d8;border:1px solid #fff;border-right-color:#716f64;border-bottom-color:#716f64"></div>
<svg class="a" style="left:994px;top:446px;" width="8" height="5" viewBox="0 0 8 5"><path d="M0 0H7L3.5 4Z" fill="#aca899"/></svg>
<div class="a" style="left:784px;top:460px;width:13px;height:13px;background:#ece9d8;border:1px solid #aca899;border-right-color:#fff;border-bottom-color:#fff;box-shadow:inset 1px 1px 0 #7d7b70"></div>
<div class="t" style="left:801px;top:461px;font-size:11px;line-height:13px;color:#aca899;letter-spacing:-0.14px;">Alt key</div>
<div class="a" style="left:856px;top:460px;width:13px;height:13px;background:#ece9d8;border:1px solid #aca899;border-right-color:#fff;border-bottom-color:#fff;box-shadow:inset 1px 1px 0 #7d7b70"></div>
<div class="t" style="left:873px;top:461px;font-size:11px;line-height:13px;color:#aca899;letter-spacing:-0.15px;">Control key</div>
<div class="a" style="left:932px;top:460px;width:13px;height:13px;background:#ece9d8;border:1px solid #aca899;border-right-color:#fff;border-bottom-color:#fff;box-shadow:inset 1px 1px 0 #7d7b70"></div>
<div class="t" style="left:949px;top:461px;font-size:11px;line-height:13px;color:#aca899;letter-spacing:-0.14px;">Shift key</div>
<div class="t" style="left:784px;top:481px;font-size:11px;line-height:13px;color:#000;letter-spacing:-0.03px;">Application:</div>
<div class="t" style="left:784px;top:502px;font-size:11px;line-height:13px;color:#000;letter-spacing:0.11px;">Object type:</div>
<div class="a" style="left:888px;top:499px;width:120px;height:19px;background:#ece9d8;border:1px solid #aca899;border-right-color:#fff;border-bottom-color:#fff;box-shadow:inset 1px 1px 0 #7d7b70"></div>
<div class="a" style="left:990px;top:501px;width:16px;height:15px;background:#ece9d8;border:1px solid #fff;border-right-color:#716f64;border-bottom-color:#716f64"></div>
<svg class="a" style="left:994px;top:506px;" width="8" height="5" viewBox="0 0 8 5"><path d="M0 0H7L3.5 4Z" fill="#aca899"/></svg>
<div class="t" style="left:784px;top:527.5px;font-size:11px;line-height:13px;color:#000;letter-spacing:-0.03px;">Object name:</div>
<div class="a" style="left:888px;top:525px;width:120px;height:19px;background:#ece9d8;border:1px solid #aca899;border-right-color:#fff;border-bottom-color:#fff;box-shadow:inset 1px 1px 0 #7d7b70"></div>
<div class="t" style="left:784px;top:552px;font-size:11px;line-height:13px;color:#000;letter-spacing:0.01px;">Delay time (s):</div>
<div class="a" style="left:888px;top:548px;width:120px;height:20px;background:#fff;border:1px solid #aca899;border-right-color:#fff;border-bottom-color:#fff;box-shadow:inset 1px 1px 0 #7d7b70"></div>
<div class="a" style="left:990px;top:550px;width:16px;height:16px;background:#ece9d8;border:1px solid #fff;border-right-color:#716f64;border-bottom-color:#716f64"></div>
<svg class="a" style="left:994px;top:556px;" width="8" height="5" viewBox="0 0 8 5"><path d="M0 0H7L3.5 4Z" fill="#000"/></svg>
<div class="t" style="left:894px;top:553px;font-size:11px;line-height:13px;color:#000;letter-spacing:0.07px;">Infinite</div>
<div class="a" style="left:807px;top:577px;width:1px;height:18px;background:#aca899"></div>
<div class="a" style="left:860px;top:577px;width:1px;height:18px;background:#aca899"></div>
<div class="a" style="left:888px;top:577px;width:1px;height:18px;background:#aca899"></div>
<div class="a" style="left:784px;top:600px;width:224px;height:1px;background:#aca899"></div>
<div class="a" style="left:784px;top:601px;width:224px;height:1px;background:#fff"></div>
<div class="a" style="left:784px;top:684px;width:224px;height:1px;background:#aca899"></div>
<div class="a" style="left:784px;top:685px;width:224px;height:1px;background:#fff"></div>
<div class="t" style="left:784px;top:695px;font-size:11px;line-height:13px;color:#000;letter-spacing:-0.22px;"><u>J</u>ump-in point:</div>
<div class="a" style="left:888px;top:690px;width:121px;height:20px;background:#ece9d8;border:1px solid #aca899;border-right-color:#fff;border-bottom-color:#fff;box-shadow:inset 1px 1px 0 #7d7b70"></div>
<div class="a" style="left:779px;top:740px;width:239px;height:1px;background:#fff"></div>
<svg class="a" style="left:781px;top:124px;" width="16" height="16" viewBox="0 0 16 16"><path d="M5.5 1L9 10M10.5 1L7 10" stroke="#b5b2a3" stroke-width="1.5" fill="none"/><circle cx="5" cy="12.5" r="2.2" fill="none" stroke="#b5b2a3" stroke-width="1.5"/><circle cx="11" cy="12.5" r="2.2" fill="none" stroke="#b5b2a3" stroke-width="1.5"/></svg>
<svg class="a" style="left:804px;top:124px;" width="17" height="16" viewBox="0 0 17 16"><path d="M1.5 1.5H7L9 3.5V10.5H1.5Z" fill="#dcd9cc" stroke="#b5b2a3"/><path d="M7.5 5.5H13L15 7.5V14.5H7.5Z" fill="#dcd9cc" stroke="#b5b2a3"/></svg>
<svg class="a" style="left:828px;top:124px;" width="17" height="17" viewBox="0 0 17 17"><rect x="1.5" y="3" width="11" height="11.5" fill="#dcd9cc" stroke="#b5b2a3"/><rect x="4.5" y="1.5" width="5" height="3" fill="#dcd9cc" stroke="#b5b2a3"/><path d="M7.5 7.5H13L15.5 10V15.5H7.5Z" fill="#e8e6da" stroke="#b5b2a3"/></svg>
<svg class="a" style="left:851px;top:124px;" width="16" height="16" viewBox="0 0 16 16"><path d="M2.5 2L13.5 14M13.5 2L2.5 14" stroke="#b5b2a3" stroke-width="1.6"/></svg>
<svg class="a" style="left:881px;top:124px;" width="16" height="16" viewBox="0 0 16 16"><text x="8" y="14" text-anchor="middle" font-family="Liberation Serif, serif" font-weight="bold" font-size="17" fill="#1c3c9c">A</text></svg>
<svg class="a" style="left:902px;top:124px;" width="18" height="16" viewBox="0 0 18 16"><rect x="1" y="2" width="16" height="12" fill="#fbfcff"/><text x="9" y="13" text-anchor="middle" font-family="Liberation Serif, serif" font-size="13" fill="#4a66b8">T</text><path d="M1.5 2.5V14M16.5 2.5V14" stroke="#2a46a8" stroke-width="1"/><path d="M3 8.5H5.5M12.5 8.5H15" stroke="#2a46a8" stroke-width=".9"/></svg>
<svg class="a" style="left:926px;top:124px;" width="16" height="16" viewBox="0 0 16 16"><circle cx="7" cy="6" r="5" fill="#c6c4b8" stroke="#b5b2a3" stroke-width="1.3"/><path d="M3 10L1 14.5H7M11 10L13 14.5H15.5" stroke="#b5b2a3" stroke-width="1.6" fill="none"/><path d="M4 13H12" stroke="#b5b2a3" stroke-width="2"/></svg>
<svg class="a" style="left:783px;top:149px;" width="16" height="16" viewBox="0 0 16 16"><rect x="2" y="2.5" width="12" height="3" fill="#1a1a1a"/><rect x="2" y="4.7" width="12" height="1.6" fill="#8a8a8a"/><rect x="2" y="6.5" width="8" height="3" fill="#1a1a1a"/><rect x="2" y="8.7" width="8" height="1.6" fill="#8a8a8a"/><rect x="2" y="10.5" width="12" height="3" fill="#1a1a1a"/><rect x="2" y="12.7" width="12" height="1.6" fill="#8a8a8a"/></svg>
<svg class="a" style="left:805px;top:149px;" width="16" height="16" viewBox="0 0 16 16"><rect x="4" y="2.5" width="8" height="3" fill="#1a1a1a"/><rect x="4" y="4.7" width="8" height="1.6" fill="#8a8a8a"/><rect x="1.5" y="6.5" width="13" height="3" fill="#1a1a1a"/><rect x="1.5" y="8.7" width="13" height="1.6" fill="#8a8a8a"/><rect x="4" y="10.5" width="8" height="3" fill="#1a1a1a"/><rect x="4" y="12.7" width="8" height="1.6" fill="#8a8a8a"/></svg>
<svg class="a" style="left:828px;top:149px;" width="16" height="16" viewBox="0 0 16 16"><rect x="2" y="2.5" width="12" height="3" fill="#1a1a1a"/><rect x="2" y="4.7" width="12" height="1.6" fill="#8a8a8a"/><rect x="6" y="6.5" width="8" height="3" fill="#1a1a1a"/><rect x="6" y="8.7" width="8" height="1.6" fill="#8a8a8a"/><rect x="2" y="10.5" width="12" height="3" fill="#1a1a1a"/><rect x="2" y="12.7" width="12" height="1.6" fill="#8a8a8a"/></svg>
<svg class="a" style="left:851px;top:149px;" width="16" height="16" viewBox="0 0 16 16"><rect x="2" y="2.5" width="12" height="3" fill="#1a1a1a"/><rect x="2" y="4.7" width="12" height="1.6" fill="#8a8a8a"/><rect x="2" y="6.5" width="12" height="3" fill="#1a1a1a"/><rect x="2" y="8.7" width="12" height="1.6" fill="#8a8a8a"/><rect x="2" y="10.5" width="12" height="3" fill="#1a1a1a"/><rect x="2" y="12.7" width="12" height="1.6" fill="#8a8a8a"/></svg>
<svg class="a" style="left:879px;top:149px;" width="16" height="16" viewBox="0 0 16 16"><text x="8" y="13.5" text-anchor="middle" font-family="Liberation Serif, serif" font-weight="bold" font-size="15" fill="#000">B</text></svg>
<svg class="a" style="left:902px;top:149px;" width="16" height="16" viewBox="0 0 16 16"><text x="8" y="13.5" text-anchor="middle" font-family="Liberation Serif, serif" font-weight="bold" font-style="italic" font-size="15" fill="#000">I</text></svg>
<svg class="a" style="left:925px;top:149px;" width="16" height="16" viewBox="0 0 16 16"><text x="8" y="11.5" text-anchor="middle" font-family="Liberation Serif, serif" font-weight="bold" font-size="14" fill="#000">U</text><path d="M3 14H13" stroke="#000" stroke-width="1.5"/></svg>
<svg class="a" style="left:955px;top:149px;" width="17" height="16" viewBox="0 0 17 16"><circle cx="11" cy="6.5" r="5.5" fill="#f7d54a" stroke="#b8902a" stroke-width=".8"/><circle cx="10" cy="4" r="1.3" fill="#e02020"/><circle cx="13" cy="5" r="1.3" fill="#2040d0"/><circle cx="12.5" cy="8.5" r="1.3" fill="#20a030"/><text x="6" y="15" text-anchor="middle" font-family="Liberation Serif, serif" font-weight="bold" font-size="15" fill="#000">T</text></svg>
<svg class="a" style="left:783px;top:358px;" width="16" height="16" viewBox="0 0 16 16"><path d="M6 7V3Q6 1.5 7.5 2L8.5 6H12.5Q14.5 6.5 14 9L13 13H6Z" fill="#f0dcb0" stroke="#5a4a2a"/><rect x="1" y="9" width="6" height="6" fill="#1a2ad8"/><rect x="3" y="11" width="2" height="2" fill="#fff"/></svg>
<svg class="a" style="left:806px;top:358px;" width="16" height="16" viewBox="0 0 16 16"><rect x="3" y="2" width="9" height="11" fill="#fff" stroke="#777"/><path d="M5 5L7 8L10 3" stroke="#e02020" stroke-width="1.5" fill="none"/><path d="M14.5 3L8 12" stroke="#222" stroke-width="2"/><rect x="1" y="10" width="5" height="5" fill="#1a2ad8"/></svg>
<svg class="a" style="left:829px;top:358px;" width="16" height="16" viewBox="0 0 16 16"><rect x="2" y="2" width="12" height="9" fill="#e8eefc" stroke="#1a2a8a" stroke-width="1.4"/><path d="M10 6L14 10L12 10.5Z" fill="#222"/><rect x="2" y="9" width="5" height="5" fill="#1a2ad8"/><rect x="3.5" y="10.5" width="2" height="2" fill="#fff"/></svg>
<svg class="a" style="left:852px;top:358px;" width="16" height="16" viewBox="0 0 16 16"><rect x="2" y="2" width="13" height="10" fill="#e8eefc" stroke="#1a2a8a" stroke-width="1.4"/><ellipse cx="10" cy="6.5" rx="3.5" ry="2.5" fill="#f0dcb0" stroke="#8a6a2a"/><rect x="1" y="9" width="5" height="5" fill="#1a2ad8"/><rect x="2.5" y="10.5" width="2" height="2" fill="#fff"/></svg>
<svg class="a" style="left:875px;top:358px;" width="16" height="16" viewBox="0 0 16 16"><path d="M6 1.5H12L15 4.5V14.5H6Z" fill="#fff" stroke="#8aa0d8"/><rect x="1" y="2" width="5" height="5" fill="#1a2ad8"/><rect x="1" y="9" width="5" height="5" fill="#1a2ad8"/><rect x="2.5" y="3.5" width="2" height="2" fill="#fff"/><rect x="2.5" y="10.5" width="2" height="2" fill="#fff"/></svg>
<svg class="a" style="left:783px;top:383px;" width="16" height="16" viewBox="0 0 16 16"><path d="M2 2H14V10.5H9L5.5 14.5V10.5H2Z" fill="#f2d64a" stroke="#3a3a1a" stroke-width="1.2"/><path d="M4.5 6L7.5 9.5L13 2.5" stroke="#1a9a2a" stroke-width="2.2" fill="none"/></svg>
<svg class="a" style="left:804px;top:383px;" width="16" height="16" viewBox="0 0 16 16"><rect x="1.5" y="1.5" width="7" height="7" fill="#f2d64a" stroke="#222" stroke-width="1.2"/><rect x="4" y="3.5" width="2" height="3" fill="#222"/><path d="M10.5 3H15M10.5 6H15M1.5 11H15M1.5 13.5H15" stroke="#9a988c" stroke-width="1.2"/></svg>
<svg class="a" style="left:827px;top:383px;" width="16" height="16" viewBox="0 0 16 16"><rect x="2" y="6.5" width="12" height="8" rx="1" fill="#f2b63a" stroke="#8a5a10"/><path d="M4.5 6.5V4Q4.5 1.5 6.5 1.5V6.5" fill="#f2d68a" stroke="#8a5a10"/><path d="M3 8H13" stroke="#fbe08a"/></svg>
<svg class="a" style="left:850px;top:383px;" width="16" height="16" viewBox="0 0 16 16"><path d="M5 2L13 8L8 14L1.5 8Z" fill="#e8f0ff" stroke="#2a4ab0" stroke-width="1.2"/><path d="M4 8L8 12L11 8Z" fill="#3a6ad8"/><path d="M13 8Q16 11 14 13.5Q12 12 13 8Z" fill="#2a5ad0"/><path d="M5 2V6" stroke="#555"/></svg>
<svg class="a" style="left:879px;top:383px;" width="16" height="16" viewBox="0 0 16 16"><path d="M2 1.5H10L12 3.5V12.5H2Z" fill="#dcd9cc" stroke="#b5b2a3"/><path d="M5 4H13L15 6V14H5Z" fill="#dcd9cc" stroke="#b5b2a3"/></svg>
<svg class="a" style="left:903px;top:383px;" width="16" height="16" viewBox="0 0 16 16"><path d="M2 1.5H10L12 3.5V12.5H2Z" fill="#dcd9cc" stroke="#b5b2a3"/><text x="13" y="15" font-size="6" font-family="Liberation Sans, sans-serif" fill="#b5b2a3">2</text></svg>
<svg class="a" style="left:925px;top:383px;" width="16" height="16" viewBox="0 0 16 16"><path d="M2 1.5H10L12 3.5V12.5H2Z" fill="#dcd9cc" stroke="#b5b2a3"/></svg>
<svg class="a" style="left:948px;top:383px;" width="16" height="16" viewBox="0 0 16 16"><path d="M2 1.5H10L12 3.5V12.5H2Z" fill="#dcd9cc" stroke="#b5b2a3"/><path d="M8 6V11M6 9L8 11.5L10 9" stroke="#b5b2a3" fill="none"/></svg>
<svg class="a" style="left:971px;top:383px;" width="17" height="16" viewBox="0 0 17 16"><rect x="1" y="1" width="8" height="10" fill="#e8eefc" stroke="#2a4ab0"/><text x="10" y="15" text-anchor="middle" font-family="Liberation Serif, serif" font-weight="bold" font-size="16" fill="#0a1a8a">A</text></svg>
<svg class="a" style="left:786px;top:577px;" width="16" height="17" viewBox="0 0 16 17"><rect x="1.5" y="1.5" width="11" height="10" fill="none" stroke="#d02020" stroke-width="1.6" stroke-dasharray="2 1.2"/><path d="M6 6V15L8.5 12.5L10.5 16L12 15L10 11.5H13.5Z" fill="#000" stroke="#fff" stroke-width=".5"/></svg>
<svg class="a" style="left:814px;top:577px;" width="16" height="16" viewBox="0 0 16 16"><rect x="2" y="3.5" width="12" height="9" fill="#f0eee4" stroke="#8f8d80"/></svg>
<svg class="a" style="left:838px;top:577px;" width="16" height="16" viewBox="0 0 16 16"><path d="M5 7L8 1.5L11 7Z M3 8H13V11H3Z" fill="#e4e2d6" stroke="#8f8d80"/><circle cx="4" cy="13" r="1.5" fill="#8f8d80"/><circle cx="12" cy="13" r="1.5" fill="#8f8d80"/><path d="M1.5 14.5H14.5" stroke="#8f8d80"/></svg>
<svg class="a" style="left:866px;top:577px;" width="16" height="16" viewBox="0 0 16 16"><circle cx="8" cy="9" r="5.5" fill="#e4e2d6" stroke="#8f8d80" stroke-width="1.4"/><path d="M8 5.5V9H11" stroke="#8f8d80" fill="none"/><path d="M10 2L13 4" stroke="#8f8d80" stroke-width="1.6"/></svg>
<svg class="a" style="left:897px;top:577px;" width="16" height="16" viewBox="0 0 16 16"><circle cx="6" cy="10.5" r="3.3" fill="none" stroke="#222" stroke-width="2"/><path d="M8.5 8L13 3.5" stroke="#222" stroke-width="1.8"/><path d="M9.5 2.5H14V7Z" fill="#222"/></svg>
<div class="a" style="left:7px;top:576px;width:767px;height:17px;background:#7a96d9"></div>
<div class="t" style="left:11px;top:579px;font-size:11px;line-height:13px;color:#dfe6f6;letter-spacing:-0.16px;">Frame Structure</div>
<svg class="a" style="left:742px;top:578px;" width="30" height="13" viewBox="0 0 30 13"><path d="M6 2.5H10V6.5H6Z M5 7H11 M8 7.5V11" stroke="#fff" stroke-width="1.2" fill="none"/><path d="M20 2.5L27 9.5M27 2.5L20 9.5" stroke="#fff" stroke-width="2"/></svg>
<div class="a" style="left:7px;top:593px;width:767px;height:148px;background:#ece9d8;border-left:1px solid #8a887c;border-top:1px solid #a09e92"></div>
<div class="a" style="left:7px;top:739.5px;width:767px;height:2px;background:#fbfaf6"></div>
<svg class="a" style="left:0px;top:0px;" width="400" height="700" viewBox="0 0 400 700"><path d="M50 636.5H210" stroke="#222" stroke-width="1.3"/><path d="M210 636.5H250" stroke="#19d219" stroke-width="1.3"/><path d="M250 636.5H290" stroke="#222" stroke-width="1.3"/><circle cx="50" cy="636.5" r="10.5" fill="#f00"/><text x="50" y="641" text-anchor="middle" font-family="Liberation Sans, sans-serif" font-weight="bold" font-size="12" fill="#fff">S</text><circle cx="90" cy="636.5" r="10.5" fill="#00f"/><text x="90" y="641" text-anchor="middle" font-family="Liberation Sans, sans-serif" font-weight="bold" font-size="12" fill="#fff">F</text><circle cx="130" cy="636.5" r="10.5" fill="#00f"/><text x="130" y="641" text-anchor="middle" font-family="Liberation Sans, sans-serif" font-weight="bold" font-size="12" fill="#fff">F</text><circle cx="170" cy="636.5" r="10.5" fill="#00f"/><text x="170" y="641" text-anchor="middle" font-family="Liberation Sans, sans-serif" font-weight="bold" font-size="12" fill="#fff">F</text><circle cx="210" cy="636.5" r="10.5" fill="#0d0"/><text x="210" y="641" text-anchor="middle" font-family="Liberation Sans, sans-serif" font-weight="bold" font-size="12" fill="#000">X</text><circle cx="250" cy="636.5" r="10.5" fill="#00f"/><text x="250" y="641" text-anchor="middle" font-family="Liberation Sans, sans-serif" font-weight="bold" font-size="12" fill="#fff">F</text><circle cx="290" cy="636.5" r="10.5" fill="#f00"/><text x="290" y="641" text-anchor="middle" font-family="Liberation Sans, sans-serif" font-weight="bold" font-size="12" fill="#fff">E</text><text x="82" y="624" text-anchor="middle" font-family="Liberation Sans, sans-serif" font-size="10" font-weight="bold" fill="#00f">2</text><text x="122" y="624" text-anchor="middle" font-family="Liberation Sans, sans-serif" font-size="10" font-weight="bold" fill="#00f">2</text></svg>
<div class="a" style="left:4px;top:744px;width:1017px;height:20px;background:#ece9d8"></div>
<div class="t" style="left:968px;top:749px;font-size:11px;line-height:13px;color:#000;letter-spacing:-0.30px;">Online</div>
<svg class="a" style="left:949px;top:747px;" width="17" height="15" viewBox="0 0 17 15"><rect x="2" y="1" width="9" height="6" rx="1" fill="#d8d8d8" stroke="#333"/><rect x="6" y="5.5" width="9" height="6" rx="1" fill="#c8c8c8" stroke="#333"/><path d="M1 13H16" stroke="#222" stroke-width="2"/><rect x="6" y="11.5" width="4" height="2.5" fill="#f2c21a"/></svg>
<div class="a" style="left:1014px;top:758px;width:2px;height:2px;background:#b8b4a2"></div>
<div class="a" style="left:1014px;top:754px;width:2px;height:2px;background:#b8b4a2"></div>
<div class="a" style="left:1010px;top:758px;width:2px;height:2px;background:#b8b4a2"></div>
<div class="a" style="left:1014px;top:750px;width:2px;height:2px;background:#b8b4a2"></div>
<div class="a" style="left:1010px;top:754px;width:2px;height:2px;background:#b8b4a2"></div>
<div class="a" style="left:1006px;top:758px;width:2px;height:2px;background:#b8b4a2"></div>
<div class="a" style="left:378px;top:470px;width:284px;height:82px;background:#ece9d8;border-left:3px solid #0831d9;border-right:3px solid #0814b4"></div>
<div class="a" style="left:392px;top:470px;width:168px;height:82px;background:#fff;border-left:1px solid #7f9db9;border-right:1px solid #7f9db9"></div>
<div class="t" style="left:396px;top:475px;font-size:11px;line-height:13px;color:#000;letter-spacing:0.30px;">7/6/11</div>
<div class="t" style="left:396px;top:488px;font-size:11px;line-height:13px;color:#000;letter-spacing:0.32px;">07/06/11</div>
<div class="t" style="left:396px;top:501px;font-size:11px;line-height:13px;color:#000;letter-spacing:0.33px;">07/06/2011</div>
<div class="t" style="left:396px;top:514px;font-size:11px;line-height:13px;color:#000;letter-spacing:0.32px;">11/07/06</div>
<div class="a" style="left:394px;top:526px;width:150px;height:13px;background:#316ac5"></div>
<div class="t" style="left:396px;top:527px;font-size:11px;line-height:13px;color:#fff;letter-spacing:0.00px;">2011-07-06</div>
<div class="t" style="left:396px;top:540px;font-size:11px;line-height:13px;color:#000;letter-spacing:-0.15px;">06-Jul-11</div>
<div class="a" style="left:544px;top:470px;width:15px;height:82px;background:linear-gradient(90deg,#cbdafb,#bccdf6);border-left:1px solid #eef3fd"></div>
<div class="a" style="left:544px;top:516px;width:15px;height:1px;background:#fff"></div>
<div class="a" style="left:548px;top:521px;width:7px;height:1px;background:#eef4fe"></div>
<div class="a" style="left:548px;top:523px;width:7px;height:1px;background:#eef4fe"></div>
<div class="a" style="left:548px;top:525px;width:7px;height:1px;background:#eef4fe"></div>
<div class="a" style="left:573px;top:458px;width:74px;height:22px;border:1px solid #003c74;border-radius:3px;background:linear-gradient(#fff,#f3f2ea 70%,#d9d5c6);box-shadow:inset 0 0 0 2px #8fb0ee"></div>
<div class="t" style="left:602px;top:463px;font-size:11px;line-height:13px;color:#000;letter-spacing:-0.24px;">OK</div>
<div class="a" style="left:573px;top:487px;width:74px;height:22px;border:1px solid #003c74;border-radius:3px;background:linear-gradient(#fff,#f3f2ea 70%,#d9d5c6)"></div>
<div class="t" style="left:593px;top:492px;font-size:11px;line-height:13px;color:#000;letter-spacing:-0.17px;">Cancel</div>
<svg class="a" style="left:100px;top:370px;" width="300" height="150" viewBox="0 0 300 150"><path d="M26 8H232.5Q244.8 8 244.8 20V109L284 121.3L244.8 123.3V127Q244.8 138.8 232.5 138.8H26Q14.2 138.8 14.2 127V20Q14.2 8 26 8Z" fill="#80f580" stroke="#3c3c3c" stroke-width="2.4" stroke-linejoin="round"/></svg>
<div class="a" style="left:119px;top:382.5px;width:197px;height:20px;background:#022f6a"></div>
<div class="t" style="left:126px;top:384.7px;font-size:13px;line-height:15px;color:#fff;font-weight:bold;transform:scaleX(.84);transform-origin:0 0">Try It!</div>
<div class="t" style="left:266px;top:386px;font-size:12px;line-height:14px;color:#c4d8f5;letter-spacing:0.09px;text-decoration:underline">Actions</div>
<div class="a" style="left:318px;top:382.5px;width:23px;height:20px;background:#bcd6f7;border:2px solid #000"></div>
<svg class="a" style="left:318px;top:382.5px;" width="23" height="20" viewBox="0 0 23 20"><path d="M5.5 4.5L17.5 15.5M17.5 4.5L5.5 15.5" stroke="#000" stroke-width="2.8"/></svg>
<div class="t" style="left:126px;top:414px;font-size:13px;line-height:15px;color:#000;letter-spacing:0.07px;">In the live application, you can</div>
<div class="t" style="left:126px;top:430px;font-size:13px;line-height:15px;color:#000;letter-spacing:0.07px;">choose any format. In this example,</div>
<div class="t" style="left:126px;top:446px;font-size:13px;line-height:15px;color:#000;letter-spacing:0.07px;">we selected a specific format.</div>
<div class="t" style="left:126px;top:481px;font-size:13px;line-height:15px;color:#000;letter-spacing:0.22px;">Press [Enter] to <b style="color:#0a32c8;text-decoration:underline">continue</b>.</div>
<div class="a" style="left:353px;top:349px;width:323px;height:126px;background:#0a50dc;border-radius:8px 8px 0 0;border-right:3px solid #001ea8;border-bottom:3px solid #001ea8;border-left:1px solid #0a40c8"></div>
<div class="a" style="left:353px;top:349px;width:323px;height:29px;border-radius:7px 7px 0 0;background:linear-gradient(#0a5be0 0,#2b7bf0 3px,#0b5ce4 8px,#0650d8 18px,#0a57e0 24px,#0546c8 29px)"></div>
<div class="a" style="left:357px;top:378px;width:315px;height:93px;background:#ece9d8"></div>
<div class="t" style="left:361px;top:357px;font-size:13px;line-height:15px;color:#fff;letter-spacing:-0.07px;font-weight:bold;text-shadow:1px 1px 0 #0a2a80">Topic Editor</div>
<div class="a" style="left:651px;top:354px;width:21px;height:21px;border:1px solid #c8d4f0;border-radius:3px;background:linear-gradient(135deg,#8a9ad0,#7083c4)"></div>
<svg class="a" style="left:651px;top:354px;" width="21" height="21" viewBox="0 0 21 21"><path d="M6 6L15 15M15 6L6 15" stroke="#c3cbe6" stroke-width="2.2"/></svg>
<svg class="a" style="left:366px;top:388px;" width="34" height="34" viewBox="0 0 34 34"><defs><radialGradient id="qg" cx="40%" cy="30%" r="70%"><stop offset="0" stop-color="#fff"/><stop offset="1" stop-color="#b4c2e6"/></radialGradient></defs><path d="M16 1.5C24.5 1.5 30.5 7.5 30.5 14.5C30.5 21 25.5 26 19 27L22 32.5L13.5 27.2C6.5 26.5 1.5 21 1.5 14.5C1.5 7.5 7.5 1.5 16 1.5Z" fill="url(#qg)" stroke="#8e9cc4" stroke-width="1"/><text x="16" y="22" text-anchor="middle" font-family="Liberation Sans, sans-serif" font-weight="bold" font-size="21" fill="#1a3cc8">?</text></svg>
<div class="t" style="left:417px;top:399px;font-size:11px;line-height:13px;color:#000;letter-spacing:0.03px;">Are you sure you want to delete the current frame?</div>
<div class="a" style="left:438px;top:439px;width:74px;height:22px;border:1px solid #003c74;border-radius:3px;background:linear-gradient(#fff,#f3f2ea 70%,#d9d5c6);box-shadow:inset 0 0 0 2px #8fb0ee"></div>
<div class="t" style="left:466px;top:444px;font-size:11px;line-height:13px;color:#000;letter-spacing:-0.18px;">Yes</div>
<div class="a" style="left:518px;top:439px;width:74px;height:22px;border:1px solid #003c74;border-radius:3px;background:linear-gradient(#fff,#f3f2ea 70%,#d9d5c6)"></div>
<div class="t" style="left:548px;top:444px;font-size:11px;line-height:13px;color:#000;letter-spacing:-0.21px;">No</div>
</div></body></html>
